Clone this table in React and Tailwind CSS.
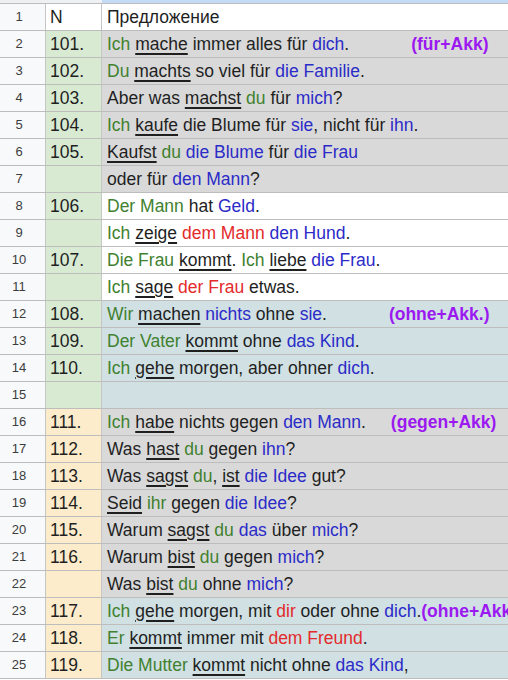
import React from 'react';

// segment styles, written out in full so Tailwind picks them up
const seg = {
  t: 'text-[#1f1f1f]',
  g: 'text-[#41812f]',
  b: 'text-[#2b2bc8]',
  r: 'text-[#e32b2b]',
  u: 'text-[#1f1f1f] underline decoration-[1.5px] underline-offset-[3px]',
};

const nBg = {
  w: 'bg-white',
  g: 'bg-[#d9ead3]',
  o: 'bg-[#fdeccb]',
};

const rowBg = {
  w: 'bg-white',
  s: 'bg-[#d9d9d9]',
  c: 'bg-[#d0e0e3]',
};

const rows = [
  { num: 'N', nb: 'w', bg: 'w', parts: [['t', 'Предложение']] },
  { num: '101.', nb: 'g', bg: 's', parts: [['g', 'Ich'], ['t', ' '], ['u', 'mache'], ['t', ' immer alles für '], ['b', 'dich'], ['t', '.']], note: { text: '(für+Akk)', ml: 'ml-[62px]' } },
  { num: '102.', nb: 'g', bg: 's', parts: [['g', 'Du'], ['t', ' '], ['u', 'machts'], ['t', ' so viel für '], ['b', 'die Familie'], ['t', '.']] },
  { num: '103.', nb: 'g', bg: 's', parts: [['t', 'Aber was '], ['u', 'machst'], ['t', ' '], ['g', 'du'], ['t', ' für '], ['b', 'mich'], ['t', '?']] },
  { num: '104.', nb: 'g', bg: 's', parts: [['g', 'Ich'], ['t', ' '], ['u', 'kaufe'], ['t', ' die Blume für '], ['b', 'sie'], ['t', ', nicht für '], ['b', 'ihn'], ['t', '.']] },
  { num: '105.', nb: 'g', bg: 's', parts: [['u', 'Kaufst'], ['t', ' '], ['g', 'du'], ['t', ' '], ['b', 'die Blume'], ['t', ' für '], ['b', 'die Frau']] },
  { num: '', nb: 'g', bg: 's', parts: [['t', 'oder für '], ['b', 'den Mann'], ['t', '?']] },
  { num: '106.', nb: 'g', bg: 'w', parts: [['g', 'Der Mann'], ['t', ' hat '], ['b', 'Geld'], ['t', '.']] },
  { num: '', nb: 'g', bg: 'w', parts: [['g', 'Ich'], ['t', ' '], ['u', 'zeige'], ['t', ' '], ['r', 'dem Mann'], ['t', ' '], ['b', 'den Hund'], ['t', '.']] },
  { num: '107.', nb: 'g', bg: 'w', parts: [['g', 'Die Frau'], ['t', ' '], ['u', 'kommt'], ['t', '. '], ['g', 'Ich'], ['t', ' '], ['u', 'liebe'], ['t', ' '], ['b', 'die Frau'], ['t', '.']] },
  { num: '', nb: 'g', bg: 'w', parts: [['g', 'Ich'], ['t', ' '], ['u', 'sage'], ['t', ' '], ['r', 'der Frau'], ['t', ' etwas.']] },
  { num: '108.', nb: 'g', bg: 'c', parts: [['g', 'Wir'], ['t', ' '], ['u', 'machen'], ['t', ' '], ['b', 'nichts'], ['t', ' ohne '], ['b', 'sie'], ['t', '.']], note: { text: '(ohne+Akk.)', ml: 'ml-[62px]' } },
  { num: '109.', nb: 'g', bg: 'c', parts: [['g', 'Der Vater'], ['t', ' '], ['u', 'kommt'], ['t', ' ohne '], ['b', 'das Kind'], ['t', '.']] },
  { num: '110.', nb: 'g', bg: 'c', parts: [['g', 'Ich'], ['t', ' '], ['u', 'gehe'], ['t', ' morgen, aber ohner '], ['b', 'dich'], ['t', '.']] },
  { num: '', nb: 'g', bg: 'c', parts: [] },
  { num: '111.', nb: 'o', bg: 's', parts: [['g', 'Ich'], ['t', ' '], ['u', 'habe'], ['t', ' nichts gegen '], ['b', 'den Mann'], ['t', '.']], note: { text: '(gegen+Akk)', ml: 'ml-[25px]' } },
  { num: '112.', nb: 'o', bg: 's', parts: [['t', 'Was '], ['u', 'hast'], ['t', ' '], ['g', 'du'], ['t', ' gegen '], ['b', 'ihn'], ['t', '?']] },
  { num: '113.', nb: 'o', bg: 's', parts: [['t', 'Was '], ['u', 'sagst'], ['t', ' '], ['g', 'du'], ['t', ', '], ['u', 'ist'], ['t', ' '], ['b', 'die Idee'], ['t', ' gut?']] },
  { num: '114.', nb: 'o', bg: 's', parts: [['u', 'Seid'], ['t', ' '], ['g', 'ihr'], ['t', ' gegen '], ['b', 'die Idee'], ['t', '?']] },
  { num: '115.', nb: 'o', bg: 's', parts: [['t', 'Warum '], ['u', 'sagst'], ['t', ' '], ['g', 'du'], ['t', ' '], ['b', 'das'], ['t', ' über '], ['b', 'mich'], ['t', '?']] },
  { num: '116.', nb: 'o', bg: 's', parts: [['t', 'Warum '], ['u', 'bist'], ['t', ' '], ['g', 'du'], ['t', ' gegen '], ['b', 'mich'], ['t', '?']] },
  { num: '', nb: 'o', bg: 's', parts: [['t', 'Was '], ['u', 'bist'], ['t', ' '], ['g', 'du'], ['t', ' ohne '], ['b', 'mich'], ['t', '?']] },
  { num: '117.', nb: 'o', bg: 'c', parts: [['g', 'Ich'], ['t', ' '], ['u', 'gehe'], ['t', ' morgen, mit '], ['r', 'dir'], ['t', ' oder ohne '], ['b', 'dich'], ['t', '.']], note: { text: '(ohne+Akk', ml: 'ml-0' } },
  { num: '118.', nb: 'o', bg: 'c', parts: [['g', 'Er'], ['t', ' '], ['u', 'kommt'], ['t', ' immer mit '], ['r', 'dem Freund'], ['t', '.']] },
  { num: '119.', nb: 'o', bg: 'c', parts: [['g', 'Die Mutter'], ['t', ' '], ['u', 'kommt'], ['t', ' nicht ohne '], ['b', 'das Kind'], ['t', ',']] },
];

const Row = ({ index, row }) => (
  <div className="grid h-[27px] grid-cols-[46px_56px_1fr] border-b border-[#bdbdbd]">
    <div className="flex items-center justify-center border-r border-[#c6c6c6] bg-[#f8f9fa] pr-[7px] text-[13px] text-[#3c3c3c]">
      {index}
    </div>
    <div className={`flex items-center border-r border-[#c6c6c6] pl-[4px] text-[17.5px] text-[#1f1f1f] ${nBg[row.nb]}`}>
      {row.num}
    </div>
    <div className={`flex items-center overflow-hidden whitespace-pre pl-[5px] text-[17.5px] ${rowBg[row.bg]}`}>
      {row.parts.map(([k, text], i) => (
        <span key={i} className={seg[k]}>{text}</span>
      ))}
      {row.note && (
        <span className={`font-bold text-[#9b19f0] ${row.note.ml}`}>{row.note.text}</span>
      )}
    </div>
  </div>
);

export default function App() {
  return (
    <div className="h-[680px] w-[508px] overflow-hidden bg-white [font-family:'Liberation_Sans',Arial,sans-serif]">
      <div className="grid h-[4px] grid-cols-[102px_1fr] border-b border-[#bdbdbd]">
        <div className="bg-[#eef0f2]" />
        <div className="bg-[#c3dbf4]" />
      </div>
      {rows.map((row, i) => (
        <Row key={i} index={i + 1} row={row} />
      ))}
    </div>
  );
}
